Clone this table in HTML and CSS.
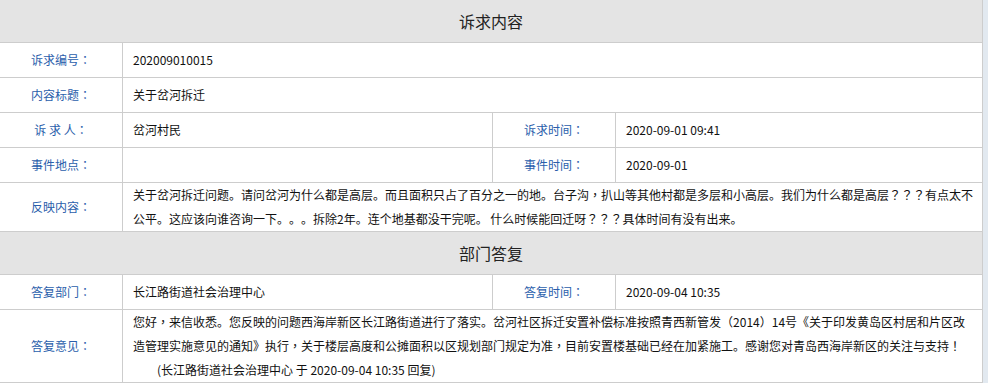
FILE: index.html
```html
<!DOCTYPE html>
<html lang="zh-CN">
<head>
<meta charset="utf-8">
<title>诉求详情</title>
<link rel="stylesheet" href="styles.css">
</head>
<body>
<div class="sheet">
  <div class="section-head">诉求内容</div>

  <div class="row">
    <div class="label">诉求编号<span class="c">：</span></div>
    <div class="value wide">202009010015</div>
  </div>
  <div class="row">
    <div class="label">内容标题<span class="c">：</span></div>
    <div class="value wide">关于岔河拆迁</div>
  </div>
  <div class="row">
    <div class="label">诉&nbsp;求&nbsp;人<span class="c">：</span></div>
    <div class="value">岔河村民</div>
    <div class="label">诉求时间<span class="c">：</span></div>
    <div class="value last">2020-09-01 09:41</div>
  </div>
  <div class="row">
    <div class="label">事件地点<span class="c">：</span></div>
    <div class="value"></div>
    <div class="label">事件时间<span class="c">：</span></div>
    <div class="value last">2020-09-01</div>
  </div>
  <div class="row">
    <div class="label">反映内容<span class="c">：</span></div>
    <div class="value wide text">关于岔河拆迁问题。请问岔河为什么都是高层。而且面积只占了百分之一的地。台子沟<span class="p">，</span>扒山等其他村都是多层和小高层。我们为什么都是高层<span class="p">？？？</span>有点太不<br>公平。这应该向谁咨询一下。。。拆除2年。连个地基都没干完呢。 什么时候能回迁呀<span class="p">？？？</span>具体时间有没有出来。</div>
  </div>

  <div class="section-head">部门答复</div>

  <div class="row">
    <div class="label">答复部门<span class="c">：</span></div>
    <div class="value">长江路街道社会治理中心</div>
    <div class="label">答复时间<span class="c">：</span></div>
    <div class="value last">2020-09-04 10:35</div>
  </div>
  <div class="row">
    <div class="label">答复意见<span class="c">：</span></div>
    <div class="value wide text">
      <p class="reply">您好<span class="p">，</span>来信收悉。您反映的问题西海岸新区长江路街道进行了落实。岔河社区拆迁安置补偿标准按照青西新管发<span class="p">（</span>2014<span class="p">）</span>14号《关于印发黄岛区村居和片区改<br>造管理实施意见的通知》执行<span class="p">，</span>关于楼层高度和公摊面积以区规划部门规定为准<span class="p">，</span>目前安置楼基础已经在加紧施工。感谢您对青岛西海岸新区的关注与支持<span class="p">！</span></p>
      <p class="sign">(长江路街道社会治理中心 于 2020-09-04 10:35 回复)</p>
    </div>
  </div>
</div>
</body>
</html>
```

FILE: styles.css
```css
html, body {
  margin: 0;
  padding: 0;
}

body {
  background: #e2e9f0;
  font-family: "Noto Sans CJK SC", "Noto Sans", sans-serif;
  font-size: 12px;
  color: #111;
  width: 988px;
  height: 383px;
  overflow: hidden;
  text-spacing-trim: space-all;
  text-autospace: no-autospace;
}

.sheet {
  width: 983px;
  background: #fff;
}

.section-head {
  box-sizing: border-box;
  height: 43px;
  background: #e4e4e4;
  border-bottom: 1px solid #cdcdcd;
  border-right: 1px solid #cdcdcd;
  display: flex;
  align-items: center;
  justify-content: center;
  font-size: 16px;
  color: #222;
}

.row {
  display: grid;
  grid-template-columns: 123px 370px 123px 367px;
  min-height: 35px;
  border-bottom: 1px solid #cdcdcd;
  box-sizing: border-box;
}

.label,
.value {
  box-sizing: border-box;
  border-right: 1px solid #cdcdcd;
  line-height: 24px;
  display: flex;
  align-items: center;
  min-height: 34px;
}

.label {
  justify-content: center;
  color: #2a5eab;
}

.value {
  padding: 0 10px;
  color: #111;
}

.value.wide {
  grid-column: 2 / 5;
  padding-right: 0;
}

.value.text {
  display: block;
}

.c,
.p {
  font-family: "Noto Sans CJK TC", "Noto Sans CJK SC", sans-serif;
  font-feature-settings: "locl" 0;
}

.reply,
.sign {
  margin: 0;
}

.sign {
  padding-left: 24px;
}
```
